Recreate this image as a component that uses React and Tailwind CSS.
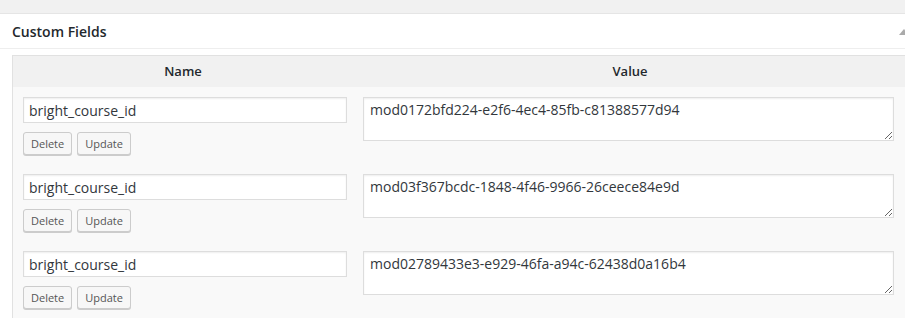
import React from "react";

const rows = [
  "mod0172bfd224-e2f6-4ec4-85fb-c81388577d94",
  "mod03f367bcdc-1848-4f46-9966-26ceece84e9d",
  "mod02789433e3-e929-46fa-a94c-62438d0a16b4",
];

function Row({ value }) {
  return (
    <div className="grid grid-cols-[340px_1fr] h-[77px] bg-[#f9f9f9]">
      <div className="pl-[10px] pt-[10px]">
        <input
          type="text"
          defaultValue="bright_course_id"
          className="block w-[324px] h-[26px] border border-[#dddddd] bg-white px-[5px] text-[14px] text-[#32373c] shadow-[inset_0_1px_2px_rgba(0,0,0,0.07)] outline-none font-['Open_Sans',sans-serif]"
        />
        <div className="flex gap-[5px] mt-[9px]">
          <button className="h-[23px] px-[7px] border border-[#cccccc] rounded-[3px] bg-[#f7f7f7] text-[11px] text-[#555555] shadow-[0_1px_0_#cccccc] leading-[20px] font-['Open_Sans',sans-serif]">
            Delete
          </button>
          <button className="h-[23px] px-[7px] border border-[#cccccc] rounded-[3px] bg-[#f7f7f7] text-[11px] text-[#555555] shadow-[0_1px_0_#cccccc] leading-[20px] font-['Open_Sans',sans-serif]">
            Update
          </button>
        </div>
      </div>
      <div className="pl-[10px] pt-[10px]">
        <textarea
          defaultValue={value}
          className="block w-[531px] h-[44px] border border-[#dddddd] bg-white px-[6px] py-[2px] text-[14px] leading-[20px] text-[#32373c] shadow-[inset_0_1px_2px_rgba(0,0,0,0.07)] outline-none font-['Open_Sans',sans-serif]"
        />
      </div>
    </div>
  );
}

export default function App() {
  return (
    <div className="relative w-[905px] h-[318px] overflow-hidden bg-[#f1f1f1] font-['Open_Sans',sans-serif]">
      <div className="h-[13px]" />
      <div className="w-[920px] border-t border-[#e5e5e5] bg-white">
        <div className="h-[35px] border-b border-[#eeeeee] flex items-center pl-[12px]">
          <span className="text-[14px] font-semibold text-[#23282d]">Custom Fields</span>
        </div>
        <div className="pt-[6px] pl-[12px]">
          <div className="w-[896px] border border-[#e1e1e1]">
            <div className="grid grid-cols-[340px_1fr] h-[31px] bg-[#f1f1f1] text-[13px] font-semibold text-[#23282d]">
              <div className="flex items-center justify-center">Name</div>
              <div className="flex items-center justify-center">Value</div>
            </div>
            {rows.map((v) => (
              <Row key={v} value={v} />
            ))}
          </div>
        </div>
      </div>
      <div className="absolute left-[899px] top-[29px] w-0 h-0 border-l-[5px] border-r-[5px] border-b-[6px] border-l-transparent border-r-transparent border-b-[#aaaaaa]" />
    </div>
  );
}
